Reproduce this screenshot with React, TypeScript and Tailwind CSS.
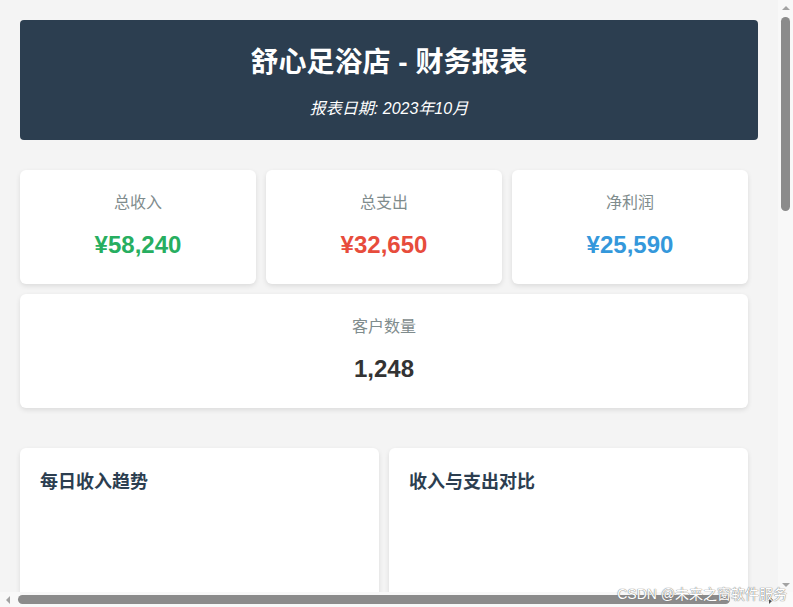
import React from "react";

const font = { fontFamily: '"Liberation Sans", Arial, "Noto Sans CJK SC", sans-serif' };

const stats = [
  { label: "总收入", value: "¥58,240", color: "text-[#27ae60]" },
  { label: "总支出", value: "¥32,650", color: "text-[#e74c3c]" },
  { label: "净利润", value: "¥25,590", color: "text-[#3498db]" },
];

function StatCard({ label, value, color, wide }: { label: string; value: string; color: string; wide?: boolean }) {
  return (
    <div
      className={`bg-white rounded-[6px] shadow-[0_2px_5px_rgba(0,0,0,0.1)] text-center pt-[21px] pb-[25px] ${wide ? "col-span-3" : ""}`}
    >
      <div className="text-[16px] leading-[24px] text-[#7f8c8d]">{label}</div>
      <div className={`mt-[16px] text-[24px] leading-[28px] font-bold ${color}`}>{value}</div>
    </div>
  );
}

function ChartCard({ title }: { title: string }) {
  return (
    <div className="bg-white rounded-[6px] shadow-[0_2px_5px_rgba(0,0,0,0.1)] p-[20px] h-[300px]">
      <h3 className="text-[18px] leading-[28px] font-bold text-[#2c3e50]">{title}</h3>
    </div>
  );
}

export default function App() {
  return (
    <div style={font} className="relative w-[793px] h-[607px] overflow-hidden bg-[#f4f4f4] flex flex-col">
      <div className="flex flex-1 min-h-0">
        <div className="w-[778px] overflow-hidden p-[20px]">
          {/* header */}
          <div className="w-[738px] bg-[#2c3e50] rounded-[4px] text-white text-center pt-[27px] pb-[22px]">
            <h1 className="text-[28px] leading-[32px] font-bold">舒心足浴店 - 财务报表</h1>
            <p className="mt-[21px] text-[16px] leading-[18px] italic">报表日期: 2023年10月</p>
          </div>

          {/* summary cards */}
          <div className="mt-[30px] w-[728px] grid grid-cols-3 gap-[10px]">
            {stats.map((s) => (
              <StatCard key={s.label} {...s} />
            ))}
            <StatCard label="客户数量" value="1,248" color="text-[#333333]" wide />
          </div>

          {/* charts */}
          <div className="mt-[40px] w-[728px] grid grid-cols-2 gap-[10px]">
            <ChartCard title="每日收入趋势" />
            <ChartCard title="收入与支出对比" />
          </div>
        </div>

        {/* vertical scrollbar */}
        <div className="w-[15px] bg-[#f8f8f8] flex flex-col items-center">
          <div className="h-[15px] flex items-center justify-center">
            <div className="w-0 h-0 border-l-[4px] border-r-[4px] border-b-[4px] border-l-transparent border-r-transparent border-b-[#a3a3a3]" />
          </div>
          <div className="w-[9px] h-[194px] mt-[2px] rounded-full bg-[#8b8b8b]" />
          <div className="flex-1" />
          <div className="h-[15px] flex items-center justify-center">
            <div className="w-0 h-0 border-l-[4px] border-r-[4px] border-t-[4px] border-l-transparent border-r-transparent border-t-[#a3a3a3]" />
          </div>
        </div>
      </div>

      {/* horizontal scrollbar */}
      <div className="h-[15px] flex bg-[#f8f8f8]">
        <div className="w-[778px] flex items-center">
          <div className="w-[15px] flex items-center justify-center">
            <div className="w-0 h-0 border-t-[4px] border-b-[4px] border-r-[4px] border-t-transparent border-b-transparent border-r-[#a3a3a3]" />
          </div>
          <div className="ml-[3px] w-[712px] h-[9px] rounded-full bg-[#8b8b8b]" />
          <div className="flex-1" />
          <div className="w-[15px] flex items-center justify-center">
            <div className="w-0 h-0 border-t-[4px] border-b-[4px] border-l-[4px] border-t-transparent border-b-transparent border-l-[#505050]" />
          </div>
        </div>
        <div className="w-[15px] bg-[#fafafa]" />
      </div>

      {/* watermark */}
      <div className="absolute right-[6px] bottom-[5px] text-[14px] leading-[16px] text-white [text-shadow:0_0_1px_#777,0_0_1px_#777]">
        CSDN @未来之窗软件服务
      </div>
    </div>
  );
}
